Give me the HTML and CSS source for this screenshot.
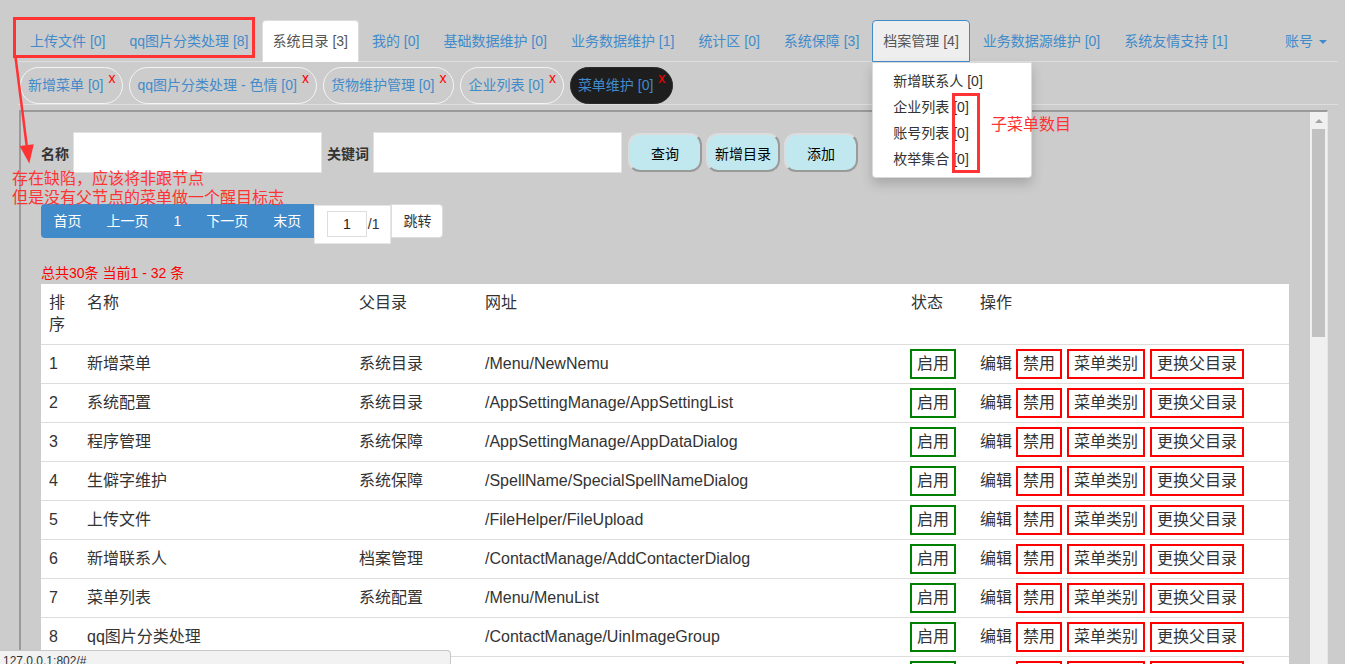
FILE: index.html
```html
<!DOCTYPE html>
<html lang="zh-CN">
<head>
<meta charset="utf-8">
<title>菜单维护</title>
<link rel="stylesheet" href="styles.css">
</head>
<body>
<div class="page">
  <ul class="nav-main">
    <li><a>上传文件 [0]</a></li>
    <li><a>qq图片分类处理 [8]</a></li>
    <li class="active"><a>系统目录 [3]</a></li>
    <li><a>我的 [0]</a></li>
    <li><a>基础数据维护 [0]</a></li>
    <li><a>业务数据维护 [1]</a></li>
    <li><a>统计区 [0]</a></li>
    <li><a>系统保障 [3]</a></li>
    <li class="open"><a>档案管理 [4]</a>
      <ul class="dropdown">
        <li>新增联系人 [0]</li>
        <li>企业列表 [0]</li>
        <li>账号列表 [0]</li>
        <li>枚举集合 [0]</li>
      </ul>
    </li>
    <li><a>业务数据源维护 [0]</a></li>
    <li><a>系统友情支持 [1]</a></li>
    <li class="right"><a>账号 <span class="caret"></span></a></li>
  </ul>

  <ul class="nav-pills">
    <li class="pill"><span class="pill-text">新增菜单 [0]</span><span class="close">x</span></li>
    <li class="pill"><span class="pill-text">qq图片分类处理 - 色情 [0]</span><span class="close">x</span></li>
    <li class="pill"><span class="pill-text">货物维护管理 [0]</span><span class="close">x</span></li>
    <li class="pill"><span class="pill-text">企业列表 [0]</span><span class="close">x</span></li>
    <li class="pill pill-active"><span class="pill-text">菜单维护 [0]</span><span class="close">x</span></li>
  </ul>

  <div class="frame">
    <div class="frame-body">
      <div class="search">
        <span class="label">名称</span>
        <input class="field" type="text">
        <span class="label label-2">关键词</span>
        <input class="field" type="text">
        <button class="btn btn-first">查询</button>
        <button class="btn">新增目录</button>
        <button class="btn">添加</button>
      </div>

      <div class="pager">
        <div class="pg-blue">
          <span class="pg-item">首页</span>
          <span class="pg-item">上一页</span>
          <span class="pg-item">1</span>
          <span class="pg-item">下一页</span>
          <span class="pg-item">末页</span>
        </div>
        <div class="pg-box"><input class="pg-input" type="text" value="1"><span class="pg-total">/1</span></div>
        <div class="pg-jump">跳转</div>
      </div>

      <div class="summary">总共30条 当前1 - 32 条</div>

      <table class="grid">
        <colgroup>
          <col class="c1"><col class="c2"><col class="c3"><col class="c4"><col class="c5"><col class="c6">
        </colgroup>
        <thead>
          <tr><th>排序</th><th>名称</th><th>父目录</th><th>网址</th><th>状态</th><th>操作</th></tr>
        </thead>
        <tbody>
          <tr><td>1</td><td>新增菜单</td><td>系统目录</td><td>/Menu/NewNemu</td><td><span class="st">启用</span></td><td class="ops">编辑<span class="op op-1">禁用</span><span class="op">菜单类别</span><span class="op">更换父目录</span></td></tr>
          <tr><td>2</td><td>系统配置</td><td>系统目录</td><td>/AppSettingManage/AppSettingList</td><td><span class="st">启用</span></td><td class="ops">编辑<span class="op op-1">禁用</span><span class="op">菜单类别</span><span class="op">更换父目录</span></td></tr>
          <tr><td>3</td><td>程序管理</td><td>系统保障</td><td>/AppSettingManage/AppDataDialog</td><td><span class="st">启用</span></td><td class="ops">编辑<span class="op op-1">禁用</span><span class="op">菜单类别</span><span class="op">更换父目录</span></td></tr>
          <tr><td>4</td><td>生僻字维护</td><td>系统保障</td><td>/SpellName/SpecialSpellNameDialog</td><td><span class="st">启用</span></td><td class="ops">编辑<span class="op op-1">禁用</span><span class="op">菜单类别</span><span class="op">更换父目录</span></td></tr>
          <tr><td>5</td><td>上传文件</td><td></td><td>/FileHelper/FileUpload</td><td><span class="st">启用</span></td><td class="ops">编辑<span class="op op-1">禁用</span><span class="op">菜单类别</span><span class="op">更换父目录</span></td></tr>
          <tr><td>6</td><td>新增联系人</td><td>档案管理</td><td>/ContactManage/AddContacterDialog</td><td><span class="st">启用</span></td><td class="ops">编辑<span class="op op-1">禁用</span><span class="op">菜单类别</span><span class="op">更换父目录</span></td></tr>
          <tr><td>7</td><td>菜单列表</td><td>系统配置</td><td>/Menu/MenuList</td><td><span class="st">启用</span></td><td class="ops">编辑<span class="op op-1">禁用</span><span class="op">菜单类别</span><span class="op">更换父目录</span></td></tr>
          <tr><td>8</td><td>qq图片分类处理</td><td></td><td>/ContactManage/UinImageGroup</td><td><span class="st">启用</span></td><td class="ops">编辑<span class="op op-1">禁用</span><span class="op">菜单类别</span><span class="op">更换父目录</span></td></tr>
          <tr class="row-partial"><td></td><td></td><td></td><td></td><td><span class="st st-empty"></span></td><td class="ops"><span class="gap-edit"></span><span class="op op-1 w1"></span><span class="op w2"></span><span class="op w3"></span></td></tr>
        </tbody>
      </table>
    </div>
    <div class="scrollbar">
      <div class="sb-up"><span class="sb-arrow"></span></div>
      <div class="sb-thumb"></div>
    </div>
  </div>
</div>

<div class="anno-box1"></div>
<svg class="anno-arrow" width="50" height="170" viewBox="0 0 50 170">
  <line x1="15.5" y1="57" x2="27" y2="148" stroke="#ff3333" stroke-width="2.5"/>
  <polygon points="29.3,163.5 19.6,146 33.8,144.2" fill="#ff3333"/>
</svg>
<div class="anno-text">存在缺陷，应该将非跟节点<br>但是没有父节点的菜单做一个醒目标志</div>
<div class="anno-box2"></div>
<div class="anno-label">子菜单数目</div>

<div class="statusbar">127.0.0.1:802/#</div>
</body>
</html>
```

FILE: styles.css
```css
html, body {
  margin: 0;
  padding: 0;
  height: 664px;
  overflow: hidden;
}

body {
  background: #cccccc;
  font-family: "Liberation Sans", "Noto Sans CJK SC", sans-serif;
  font-size: 14px;
  color: #333;
  position: relative;
}

.page {
  padding: 20px 7px 0 19px;
}

/* ---------- main nav tabs ---------- */
.nav-main {
  list-style: none;
  margin: 0 0 0 -1px;
  padding: 0 0 0 1px;
  display: flex;
  border-bottom: 1px solid #dedede;
}

.nav-main > li {
  position: relative;
  margin-bottom: -1px;
}

.nav-main > li > a {
  display: block;
  padding: 10px;
  line-height: 20px;
  border: 1px solid transparent;
  border-radius: 4px 4px 0 0;
  margin-right: 2px;
  color: #428bca;
  white-space: nowrap;
}

.nav-main > li.active > a {
  background: #fff;
  border-color: #ddd #ddd transparent;
  color: #555;
}

.nav-main > li.open > a {
  background: #eee;
  border-color: #428bca;
  color: #555;
}

.nav-main > li.right {
  margin-left: auto;
}

.nav-main > li.right > a {
  margin-right: 0;
}

.caret {
  display: inline-block;
  width: 0;
  height: 0;
  margin-left: 2px;
  vertical-align: middle;
  border-top: 4px solid #428bca;
  border-left: 4px solid transparent;
  border-right: 4px solid transparent;
}

.dropdown {
  position: absolute;
  top: 100%;
  left: 0;
  z-index: 10;
  list-style: none;
  margin: 0;
  padding: 5px 0;
  min-width: 158px;
  background: #fff;
  border: 1px solid rgba(0, 0, 0, 0.15);
  border-radius: 0 0 4px 4px;
  box-shadow: 0 6px 12px rgba(0, 0, 0, 0.18);
}

.dropdown li {
  padding: 3px 20px;
  line-height: 20px;
  color: #333;
  white-space: nowrap;
}

/* ---------- pill tabs ---------- */
.nav-pills {
  list-style: none;
  margin: 0 0 0 -1px;
  padding: 5px 0 0 2px;
  display: flex;
  gap: 6px;
  border-bottom: 1px solid #dedede;
}

.pill {
  display: flex;
  align-items: flex-start;
  height: 35px;
  padding: 0 7px;
  border: 1px solid #f5f5f5;
  border-radius: 19px;
  white-space: nowrap;
}

.pill-text {
  line-height: 35px;
  color: #428bca;
}

.close {
  margin-top: 3px;
  margin-left: 5px;
  line-height: 14px;
  color: #ff0000;
  font-size: 14px;
}

.pill-active {
  background: #1e1e1e;
  border-color: #2a2a2a;
}

/* ---------- frame ---------- */
.frame {
  margin-top: 5px;
  width: 1306px;
  height: 560px;
  border-top: 2px solid #9a9a9a;
  border-left: 2px solid #9a9a9a;
  border-right: 1px solid #e6e6e6;
  display: flex;
  overflow: hidden;
}

.frame-body {
  flex: 1;
  min-width: 0;
  padding: 20px 21px 0 20px;
  overflow: hidden;
}

.scrollbar {
  width: 17px;
  flex: none;
  background: #f0f0f0;
  display: flex;
  flex-direction: column;
}

.sb-up {
  height: 17px;
  display: flex;
  align-items: center;
  justify-content: center;
}

.sb-arrow {
  width: 0;
  height: 0;
  border-bottom: 4px solid #a3a3a3;
  border-left: 4px solid transparent;
  border-right: 4px solid transparent;
}

.sb-thumb {
  margin: 0 2px;
  height: 208px;
  background: #c1c1c1;
}

/* ---------- search ---------- */
.search {
  display: flex;
  align-items: center;
  height: 41px;
}

.label {
  font-weight: bold;
  margin-right: 4px;
}

.label-2 {
  margin-left: 5px;
}

.field {
  box-sizing: border-box;
  width: 249px;
  height: 41px;
  margin: 0;
  border: 1px solid #e2e2e2;
  background: #fff;
  outline: none;
}

.btn {
  box-sizing: border-box;
  width: 74px;
  height: 39px;
  margin: 0 0 0 4px;
  padding: 0;
  background: #c1e8ef;
  border: 2px solid;
  border-color: #dcdcdc #9a9a9a #9a9a9a #dcdcdc;
  border-radius: 12px;
  font-family: "Liberation Sans", "Noto Sans CJK SC", sans-serif;
  font-size: 14px;
  color: #000;
}

.btn-first {
  margin-left: 6px;
}

/* ---------- pager ---------- */
.pager {
  display: flex;
  align-items: flex-start;
  margin-top: 31px;
}

.pg-blue {
  display: flex;
  height: 34px;
  background: #428bca;
  border-radius: 4px 0 0 4px;
}

.pg-item {
  padding: 0 12.5px;
  line-height: 34px;
  color: #fff;
}

.pg-box {
  box-sizing: border-box;
  display: flex;
  align-items: flex-start;
  height: 39px;
  margin-top: 1px;
  padding: 5px 11px 0 12px;
  background: #fff;
  border: 1px solid #e6e6e6;
}

.pg-input {
  box-sizing: border-box;
  width: 40px;
  height: 26px;
  margin: 0;
  padding: 0;
  border: 1px solid #dddddd;
  text-align: center;
  font-family: "Liberation Sans", "Noto Sans CJK SC", sans-serif;
  font-size: 14px;
  color: #222;
  outline: none;
}

.pg-total {
  line-height: 26px;
  margin-left: 1px;
}

.pg-jump {
  box-sizing: border-box;
  height: 34px;
  padding: 0 11px;
  line-height: 32px;
  background: #fff;
  border: 1px solid #dddddd;
  border-radius: 0 4px 4px 0;
  color: #333;
}

/* ---------- summary ---------- */
.summary {
  margin-top: 19px;
  line-height: 20px;
  color: #ff0000;
}

/* ---------- table ---------- */
.grid {
  margin-top: 1px;
  width: 1248px;
  table-layout: fixed;
  border-collapse: separate;
  border-spacing: 0;
  background: #fff;
  font-size: 16px;
  line-height: 22px;
  color: #333;
}

.c1 { width: 38px; }
.c2 { width: 272px; }
.c3 { width: 126px; }
.c4 { width: 426px; }
.c5 { width: 69px; }
.c6 { width: 317px; }

.grid th {
  padding: 8px;
  text-align: left;
  font-weight: normal;
  vertical-align: top;
}

.grid td {
  padding: 4px 8px;
  border-top: 1px solid #dddddd;
  vertical-align: middle;
  white-space: nowrap;
  overflow: hidden;
}

.grid td:nth-child(5) {
  padding-left: 7px;
}

.st {
  display: inline-block;
  padding: 2px 5px;
  border: 2px solid #008000;
}

.op {
  display: inline-block;
  margin-left: 5px;
  padding: 2px 5px;
  border: 2px solid #ff0000;
}

.op-1 {
  margin-left: 4px;
}

/* partially visible last row: only the box outlines show */
.row-partial td {
  vertical-align: top;
  height: 30px;
}

.row-partial .st,
.row-partial .op {
  vertical-align: top;
  height: 22px;
}

.st-empty { width: 32px; }
.gap-edit { display: inline-block; width: 32px; }
.w1 { width: 32px; }
.w2 { width: 64px; }
.w3 { width: 80px; }

/* ---------- annotations ---------- */
.anno-box1 {
  position: absolute;
  left: 13px;
  top: 17px;
  width: 242px;
  height: 41px;
  box-sizing: border-box;
  border: 3px solid #ff3333;
  z-index: 20;
}

.anno-arrow {
  position: absolute;
  left: 0;
  top: 0;
  z-index: 20;
}

.anno-text {
  position: absolute;
  left: 12px;
  top: 169px;
  font-size: 16px;
  line-height: 19px;
  color: #ff3333;
  white-space: nowrap;
  z-index: 20;
}

.anno-box2 {
  position: absolute;
  left: 952px;
  top: 93px;
  width: 28px;
  height: 80px;
  box-sizing: border-box;
  border: 3px solid #ff3333;
  z-index: 20;
}

.anno-label {
  position: absolute;
  left: 991px;
  top: 115px;
  font-size: 16px;
  line-height: 19px;
  color: #ff3333;
  white-space: nowrap;
  z-index: 20;
}

/* ---------- status bubble ---------- */
.statusbar {
  position: absolute;
  left: 0;
  top: 650px;
  width: 451px;
  height: 24px;
  box-sizing: border-box;
  padding: 3px 0 0 3px;
  background: #f2f2f2;
  border: 1px solid #c8c8c8;
  border-left: none;
  border-radius: 0 4px 0 0;
  font-size: 12px;
  line-height: 14px;
  color: #333;
  z-index: 30;
}
```
